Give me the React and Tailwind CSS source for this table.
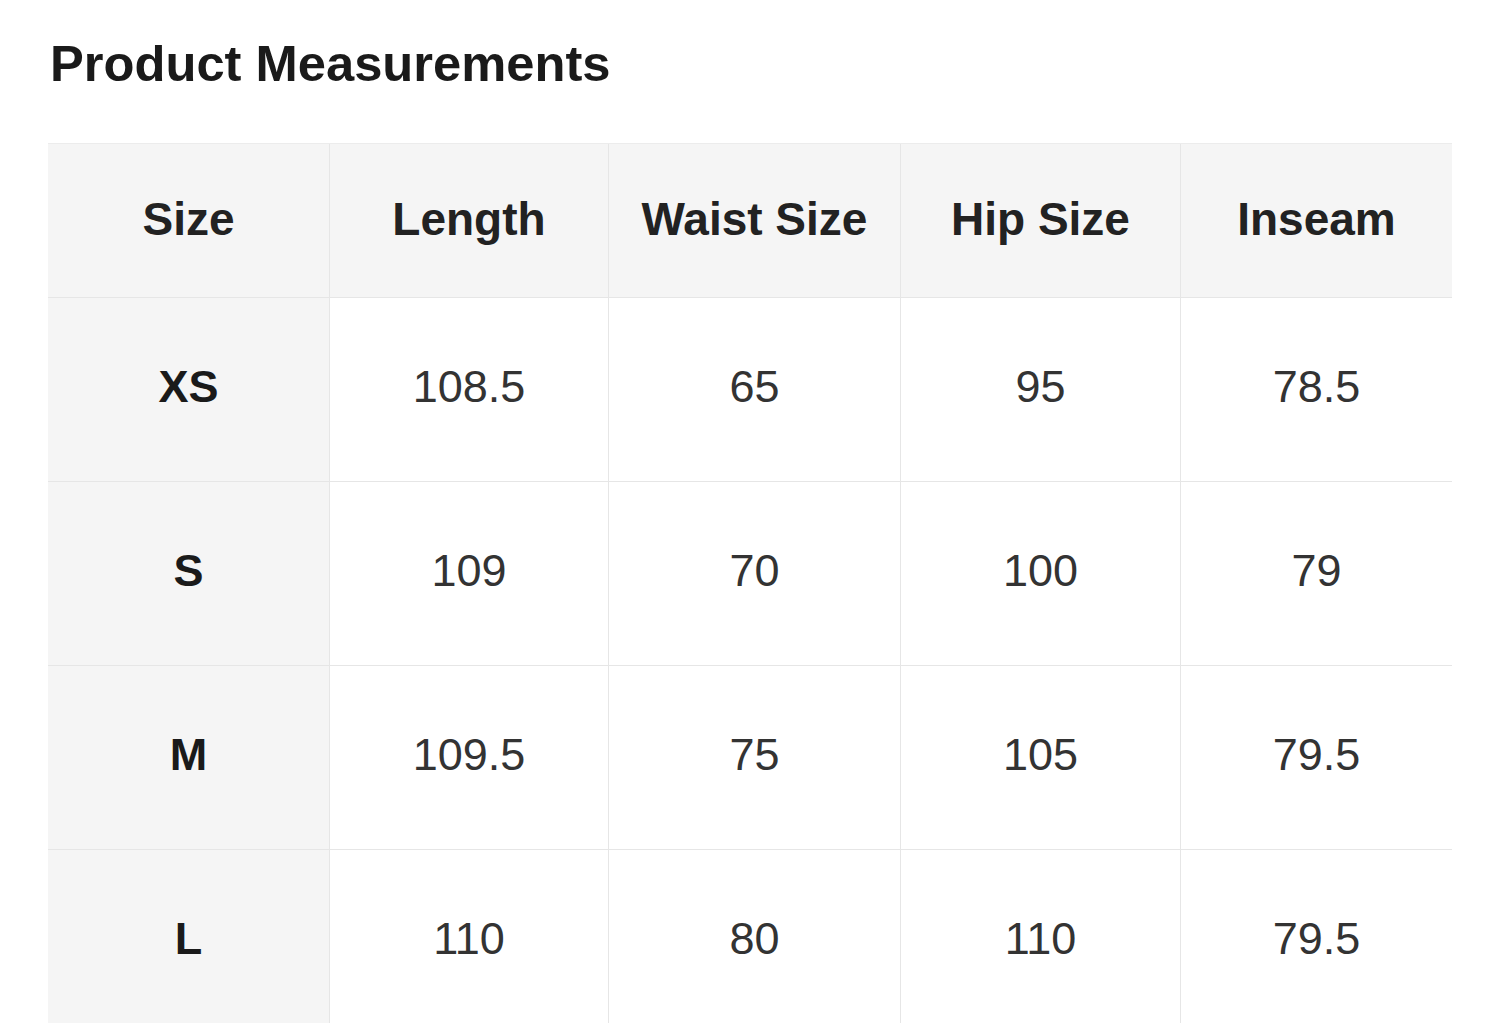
import React from 'react';

const columns = ['Size', 'Length', 'Waist Size', 'Hip Size', 'Inseam'];

const rows = [
  ['XS', '108.5', '65', '95', '78.5'],
  ['S', '109', '70', '100', '79'],
  ['M', '109.5', '75', '105', '79.5'],
  ['L', '110', '80', '110', '79.5'],
];

export default function App() {
  return (
    <div className="min-h-screen bg-white font-['Liberation_Sans',Arial,sans-serif] overflow-hidden">
      <div className="pl-[50px] pt-[39px]">
        <h1 className="text-[50.7px] leading-none font-bold text-[#1a1a1a]">Product Measurements</h1>
      </div>

      {/* Size table */}
      <div className="ml-[48px] mt-[53px] w-[1404px] grid grid-cols-[281px_279px_292px_280px_272px] border-t border-[#ececec]">
        {columns.map((col, i) => (
          <div
            key={col}
            className={`h-[154px] flex items-center justify-center pb-[2px] bg-[#f5f5f5] border-b border-[#e6e6e6] text-[46px] font-bold text-[#222] ${
              i > 0 ? 'border-l' : ''
            }`}
          >
            {col}
          </div>
        ))}
        {rows.map((row) =>
          row.map((cell, i) => (
            <div
              key={row[0] + i}
              className={`h-[184px] flex items-center justify-center pb-[5px] border-b border-[#e6e6e6] ${
                i === 0
                  ? 'bg-[#f5f5f5] text-[45px] font-bold text-[#1a1a1a]'
                  : 'bg-white border-l text-[45px] text-[#333]'
              }`}
            >
              {cell}
            </div>
          ))
        )}
      </div>
    </div>
  );
}
